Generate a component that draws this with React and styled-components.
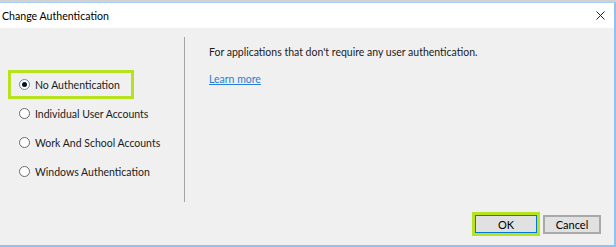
import React, { useState } from "react";
import styled, { createGlobalStyle } from "styled-components";

const GlobalStyle = createGlobalStyle`
  html, body {
    margin: 0;
    padding: 0;
    background: #d6d6d6;
  }
  body {
    font-family: Lato, "Noto Sans", sans-serif;
    font-size: 10.5px;
    color: #1b1b1b;
  }
`;

const Screen = styled.div`
  width: 616px;
  height: 247px;
  display: flex;
  flex-direction: column;
  overflow: hidden;
`;

/* strip of the app behind the dialog */
const BehindStrip = styled.div`
  height: 2px;
  background: #d2d2d2;
  flex-shrink: 0;
`;

const Window = styled.div`
  flex: 1;
  display: flex;
  flex-direction: column;
  border-top: 1px solid #a9cff1;
  border-right: 2px solid #8ec2f0;
  border-bottom: 2px solid #8ec2f0;
  min-height: 0;
`;

const TitleBar = styled.div`
  height: 25px;
  background: #ffffff;
  display: flex;
  align-items: center;
  justify-content: space-between;
  padding: 0 9px 0 2px;
  flex-shrink: 0;
`;

const Title = styled.span`
  font-size: 10.6px;
  color: #000;
`;

const CloseBox = styled.span`
  display: flex;
  width: 9px;
  height: 9px;
`;

const Body = styled.div`
  flex: 1;
  background: #f0f0f0;
  display: flex;
  flex-direction: column;
`;

const Content = styled.div`
  display: flex;
  margin-top: 9px;
  height: 165px;
`;

const LeftPanel = styled.div`
  width: 185px;
  border-right: 1px solid #a3a3a3;
  padding: 33px 0 0 8px;
  box-sizing: border-box;
  display: flex;
  flex-direction: column;
`;

const Row = styled.label`
  display: flex;
  align-items: center;
  gap: 5px;
  height: 29px;
  width: 126px;
  box-sizing: border-box;
  padding-left: 8px;
  border: 3px solid ${(p) => (p.$highlight ? "#b6e31d" : "transparent")};
  white-space: nowrap;
  cursor: default;
`;

const RadioDot = styled.span`
  width: 11px;
  height: 11px;
  border-radius: 50%;
  box-sizing: border-box;
  background: #fff;
  border: 1px solid ${(p) => (p.$checked ? "#3d8ee0" : "#6b6b6b")};
  display: flex;
  align-items: center;
  justify-content: center;
  flex-shrink: 0;
  &::after {
    content: "";
    width: 5px;
    height: 5px;
    border-radius: 50%;
    background: ${(p) => (p.$checked ? "#111" : "transparent")};
  }
`;

const RightPanel = styled.div`
  flex: 1;
  padding: 7px 0 0 24px;
  display: flex;
  flex-direction: column;
  align-items: flex-start;
`;

const Description = styled.p`
  margin: 0;
  line-height: 16px;
`;

const LearnLink = styled.a`
  margin-top: 11px;
  line-height: 16px;
  color: #2a7fd4;
  text-decoration: underline;
  cursor: pointer;
`;

const Footer = styled.div`
  display: flex;
  justify-content: flex-end;
  align-items: center;
  gap: 3px;
  padding: 10px 13px 0 0;
`;

const Focus = styled.div`
  border: 3px solid #b6e31d;
  display: flex;
`;

const Button = styled.button`
  font-family: inherit;
  font-size: 11px;
  color: #000;
  background: #e1e1e1;
  width: ${(p) => (p.$primary ? "62px" : "58px")};
  height: ${(p) => (p.$primary ? "18px" : "19px")};
  padding: 0;
  margin: 0;
  border: ${(p) => (p.$primary ? "1px solid #0078d7" : "2px solid #a9a9a9")};
  box-sizing: border-box;
  line-height: 1;
`;

const options = [
  "No Authentication",
  "Individual User Accounts",
  "Work And School Accounts",
  "Windows Authentication",
];

export default function App() {
  const [selected, setSelected] = useState(0);

  return (
    <>
      <GlobalStyle />
      <Screen>
        <BehindStrip />
        <Window>
          <TitleBar>
            <Title>Change Authentication</Title>
            <CloseBox>
              <svg width="9" height="9" viewBox="0 0 9 9">
                <path d="M0.5 0.5 L8.5 8.5 M8.5 0.5 L0.5 8.5" stroke="#222" strokeWidth="1" />
              </svg>
            </CloseBox>
          </TitleBar>
          <Body>
            <Content>
              <LeftPanel>
                {options.map((o, i) => (
                  <Row key={o} $highlight={i === 0} onClick={() => setSelected(i)}>
                    <RadioDot $checked={selected === i} />
                    {o}
                  </Row>
                ))}
              </LeftPanel>
              <RightPanel>
                <Description>For applications that don't require any user authentication.</Description>
                <LearnLink>Learn more</LearnLink>
              </RightPanel>
            </Content>
            <Footer>
              <Focus>
                <Button $primary>OK</Button>
              </Focus>
              <Button>Cancel</Button>
            </Footer>
          </Body>
        </Window>
      </Screen>
    </>
  );
}
